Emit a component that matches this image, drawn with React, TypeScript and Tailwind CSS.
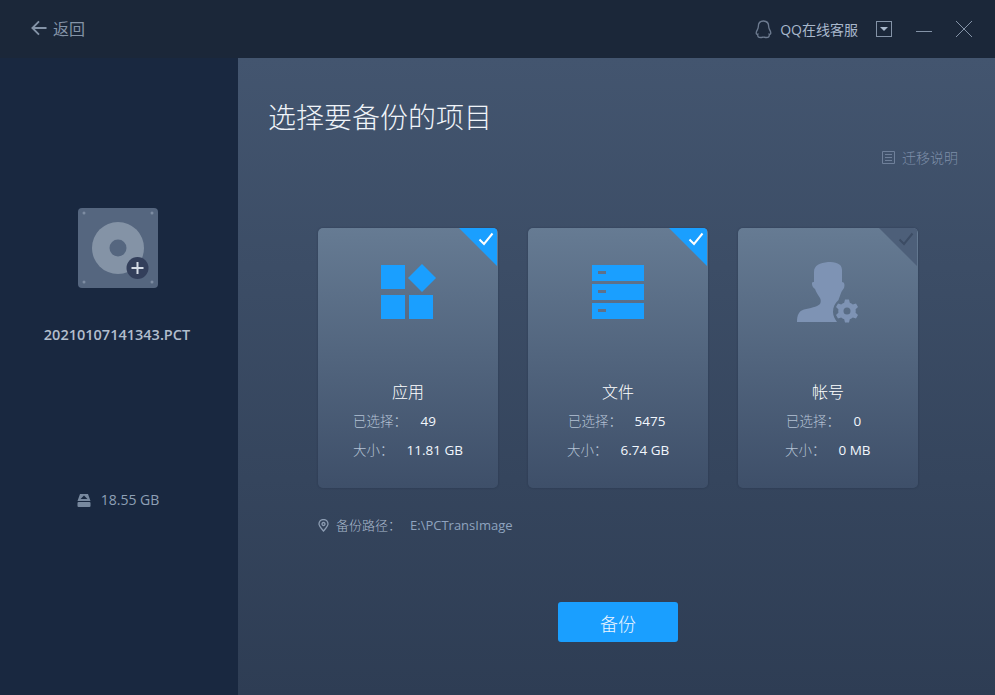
import React from "react";

function Check({ className }: { className: string }) {
  return (
    <svg width="16" height="14" viewBox="0 0 16 14" className={className} fill="none" stroke="currentColor" strokeWidth="2">
      <path d="M1.5 7.5 L6 12 L14.5 1.5" />
    </svg>
  );
}

function AppsIcon() {
  return (
    <svg width="56" height="56" viewBox="0 0 56 56" fill="#1a9fff">
      <rect x="0" y="1" width="24" height="24" />
      <path d="M41 0 L55 14 L41 28 L27 14 Z" />
      <rect x="0" y="31" width="24" height="24" />
      <rect x="28" y="31" width="24" height="24" />
    </svg>
  );
}

function FilesIcon() {
  return (
    <svg width="52" height="54" viewBox="0 0 52 54">
      <rect x="0" y="0" width="52" height="16" fill="#1a9fff" />
      <rect x="6" y="6" width="8" height="3" fill="#5f7189" />
      <rect x="0" y="19" width="52" height="16" fill="#1a9fff" />
      <rect x="6" y="25" width="8" height="3" fill="#5f7189" />
      <rect x="0" y="38" width="52" height="16" fill="#1a9fff" />
      <rect x="6" y="44" width="8" height="3" fill="#5f7189" />
    </svg>
  );
}

function AccountIcon() {
  return (
    <svg width="62" height="62" viewBox="0 0 62 62" fill="#7e93b4">
      <path d="M31 0 C38 0 45 1 45 8 L45 20 C47.500 20 48 23 47 26 C46 28 44.500 29 44 31 C43 34 42 36 41.500 38 C38 41 36 45 36 50 C36 54 38 57 40 60 L0 60 C0 53 2 49 7 47.500 C13 46 20 45 23 42 C24 40 24 38 23 36 C21 33 19 30 18 27 C16.500 26 15 24 15 22 C15 20 15.500 20 17 20 L17 10 C17 3 23 1 31 0 Z" />
      <path
        transform="translate(0 3.500)"
        fillRule="evenodd"
        d="M48 34 L52 34 L52.800 37.300 C54 37.700 55 38.300 55.800 39 L59 38 L61 41.500 L58.600 43.800 C58.800 45 58.800 46 58.600 47.200 L61 49.500 L59 53 L55.800 52 C55 52.700 54 53.300 52.800 53.700 L52 57 L48 57 L47.200 53.700 C46 53.300 45 52.700 44.200 52 L41 53 L39 49.500 L41.400 47.200 C41.200 46 41.200 45 41.400 43.800 L39 41.500 L41 38 L44.200 39 C45 38.300 46 37.700 47.200 37.300 Z M50 42 A3.500 3.500 0 1 0 50 49 A3.500 3.500 0 1 0 50 42 Z"
      />
    </svg>
  );
}

function Card(props: {
  title: string;
  icon: React.ReactNode;
  iconBox: string;
  checked: boolean;
  rowA: string;
  rowB: string;
  a: string;
  b: string;
  labelA: string;
  labelB: string;
}) {
  return (
    <div className="relative w-[180px] h-[260px] rounded-[5px] bg-gradient-to-b from-[#667b93] to-[#3e4f69] shadow-[0_0_2px_rgba(20,30,50,0.35)] overflow-hidden flex flex-col">
      {props.checked ? (
        <div className="absolute top-0 right-[1px] w-[38px] h-[38px] bg-[#1a9fff] [clip-path:polygon(0_0,100%_0,100%_100%)]">
          <Check className="absolute top-[4px] right-[3px] text-white" />
        </div>
      ) : (
        <div className="absolute top-0 right-[1px] w-[38px] h-[38px] bg-[#4d5f79] [clip-path:polygon(0_0,100%_0,100%_100%)]">
          <Check className="absolute top-[4px] right-[3px] text-[#3c4c64]" />
        </div>
      )}
      <div className={props.iconBox}>{props.icon}</div>
      <div className="h-[22px] mt-[61px] text-center text-[16px] leading-[22px] font-light text-white">{props.title}</div>
      <div className={props.rowA}>
        <span className={props.labelA}>已选择：</span>
        <span className="text-[#f2f7fd]">{props.a}</span>
      </div>
      <div className={props.rowB}>
        <span className={props.labelB}>大小：</span>
        <span className="text-[#f2f7fd]">{props.b}</span>
      </div>
    </div>
  );
}

export default function App() {
  return (
    <div className="w-[995px] h-[695px] overflow-hidden flex flex-col font-['Open_Sans','Noto_Sans_CJK_SC',sans-serif]">
      <header className="h-[58px] shrink-0 bg-[#1b2739] flex items-center pl-[31px] pr-[23px]">
        <svg width="16" height="16" viewBox="0 0 17 16" fill="none" stroke="#8493a7" strokeWidth="2" className="mt-[-2px]">
          <path d="M8.500 1 L1.500 8 L8.500 15 M1.500 8 L16.500 8" />
        </svg>
        <span className="ml-[6px] text-[16px] text-[#8493a7]">返回</span>
        <div className="ml-auto flex items-center">
          <svg width="17" height="19" viewBox="0 0 18 20" fill="none" stroke="#6d7b90" strokeWidth="1.400">
            <path d="M9 1 C5 1 3.500 4 3.500 7 C3.500 9 2.500 10 1.500 12.500 C1 14.500 1.500 15.500 3 15 C2.500 17.500 3.500 18.500 6 18.500 C7.500 18.500 8 18 9 18 C10 18 10.500 18.500 12 18.500 C14.500 18.500 15.500 17.500 15 15 C16.500 15.500 17 14.500 16.500 12.500 C15.500 10 14.500 9 14.500 7 C14.500 4 13 1 9 1 Z" />
          </svg>
          <span className="ml-[8px] text-[14px] text-[#a9b8cc]">QQ在线客服</span>
          <div className="ml-[18px] w-[16px] h-[16px] border border-[#8493a7] flex items-center justify-center">
            <div className="w-[8px] h-[4px] bg-[#a9b8cc] [clip-path:polygon(0_0,100%_0,50%_100%)]" />
          </div>
          <div className="ml-[24px] w-[16px] h-px bg-[#8493a7] mt-[4px]" />
          <svg className="ml-[24px]" width="16" height="16" viewBox="0 0 16 16" stroke="#8493a7" strokeWidth="1">
            <path d="M0 0 L16 16 M16 0 L0 16" />
          </svg>
        </div>
      </header>
      <div className="flex-1 flex">
        <aside className="w-[238px] shrink-0 bg-[#192840] flex flex-col items-center">
          <div className="relative mt-[150px] ml-[-2px] w-[80px] h-[80px] rounded-[4px] bg-[#55667f]">
            <svg width="80" height="80" viewBox="0 0 80 80" className="absolute inset-0">
              <circle cx="6" cy="5" r="1.500" fill="#7d8ca2" />
              <circle cx="74" cy="5" r="1.500" fill="#7d8ca2" />
              <circle cx="6" cy="74" r="1.500" fill="#7d8ca2" />
              <circle cx="74" cy="74" r="1.500" fill="#7d8ca2" />
              <circle cx="40" cy="40" r="26" fill="#8493a6" />
              <circle cx="40" cy="40" r="8.500" fill="#55667f" />
              <circle cx="59.500" cy="60" r="11" fill="#333f5b" />
              <path d="M59.500 54 L59.500 66 M53.500 60 L65.500 60" stroke="#d5dce6" strokeWidth="2" />
            </svg>
          </div>
          <div className="mt-[36px] ml-[-4px] text-[14.500px] leading-[22px] font-semibold text-[#b2becd]">20210107141343.PCT</div>
          <div className="mt-[145px] ml-[-2px] flex items-center text-[14px] leading-[18px] text-[#8fa0b6]">
            <svg width="14" height="13" viewBox="0 0 14 13" fill="#78899f">
              <path d="M3 0 L11 0 L13.500 7 L0.500 7 Z M7 1.500 L3.500 5 L10.500 5 Z" fillRule="evenodd" />
              <rect x="0.500" y="8" width="13" height="5" rx="1" />
            </svg>
            <span className="ml-[10px]">18.55 GB</span>
          </div>
        </aside>
        <main className="flex-1 bg-gradient-to-b from-[#43556f] to-[#2e3d54] flex flex-col">
          <div className="ml-[30px] mt-[40px] h-[38px] text-[28px] leading-[38px] font-light text-[#f0f4f9]">选择要备份的项目</div>
          <div className="mr-[37px] mt-[11px] h-[20px] self-end flex items-center text-[14px] font-light text-[#7d8ea8]">
            <svg width="13" height="13" viewBox="0 0 13 13" fill="none" stroke="#6f809a" strokeWidth="1">
              <path d="M0.500 0.500 H12.500 V12.500 H0.500 Z M3 3.500 H10 M3 6.500 H10 M3 9.500 H10" />
            </svg>
            <span className="ml-[7px]">迁移说明</span>
          </div>
          <div className="ml-[80px] mt-[61px] flex gap-[30px]">
            <Card
              title="应用"
              icon={<AppsIcon />}
              iconBox="ml-[63px] mt-[36px] h-[56px]"
              checked
              rowA="mt-[7px] h-[22px] pl-[35px] flex items-center text-[13.500px] whitespace-nowrap"
              rowB="mt-[7px] h-[22px] pl-[35px] flex items-center text-[13.500px] whitespace-nowrap"
              labelA="w-[54px] shrink-0 font-light text-[#b4c2d4]"
              labelB="w-[40px] shrink-0 font-light text-[#b4c2d4]"
              a="　49"
              b="　11.81 GB"
            />
            <Card
              title="文件"
              icon={<FilesIcon />}
              iconBox="ml-[64px] mt-[37px] h-[55px]"
              checked
              rowA="mt-[7px] h-[22px] pl-[40px] flex items-center text-[13.500px] whitespace-nowrap"
              rowB="mt-[7px] h-[22px] pl-[39px] flex items-center text-[13.500px] whitespace-nowrap"
              labelA="w-[53px] shrink-0 font-light text-[#b4c2d4]"
              labelB="w-[40px] shrink-0 font-light text-[#b4c2d4]"
              a="　5475"
              b="　6.74 GB"
            />
            <Card
              title="帐号"
              icon={<AccountIcon />}
              iconBox="ml-[59px] mt-[34px] h-[58px]"
              checked={false}
              rowA="mt-[7px] h-[22px] pl-[48px] flex items-center text-[13.500px] whitespace-nowrap"
              rowB="mt-[7px] h-[22px] pl-[47px] flex items-center text-[13.500px] whitespace-nowrap"
              labelA="w-[54px] shrink-0 font-light text-[#b4c2d4]"
              labelB="w-[40px] shrink-0 font-light text-[#b4c2d4]"
              a="　0"
              b="　0 MB"
            />
          </div>
          <div className="ml-[80px] mt-[28px] h-[20px] flex items-center text-[13px] font-light text-[#aab9cd]">
            <svg width="11" height="13" viewBox="0 0 11 13" fill="none" stroke="#8c9cb2" strokeWidth="1.300" className="mt-[-2px]">
              <path d="M5.500 12 C3 9 1 7 1 5 A4.500 4.500 0 0 1 10 5 C10 7 8 9 5.500 12 Z" />
              <circle cx="5.500" cy="5" r="1.500" />
            </svg>
            <span className="ml-[7px] w-[74px]">备份路径：</span>
            <span className="font-normal text-[#8fa3bf]">E:\PCTransImage</span>
          </div>
          <button className="mt-[66px] ml-[320px] w-[120px] h-[40px] rounded-[3px] bg-[#1a9fff] text-[18px] leading-[44px] font-light text-[#eaf5ff]">备份</button>
        </main>
      </div>
    </div>
  );
}
